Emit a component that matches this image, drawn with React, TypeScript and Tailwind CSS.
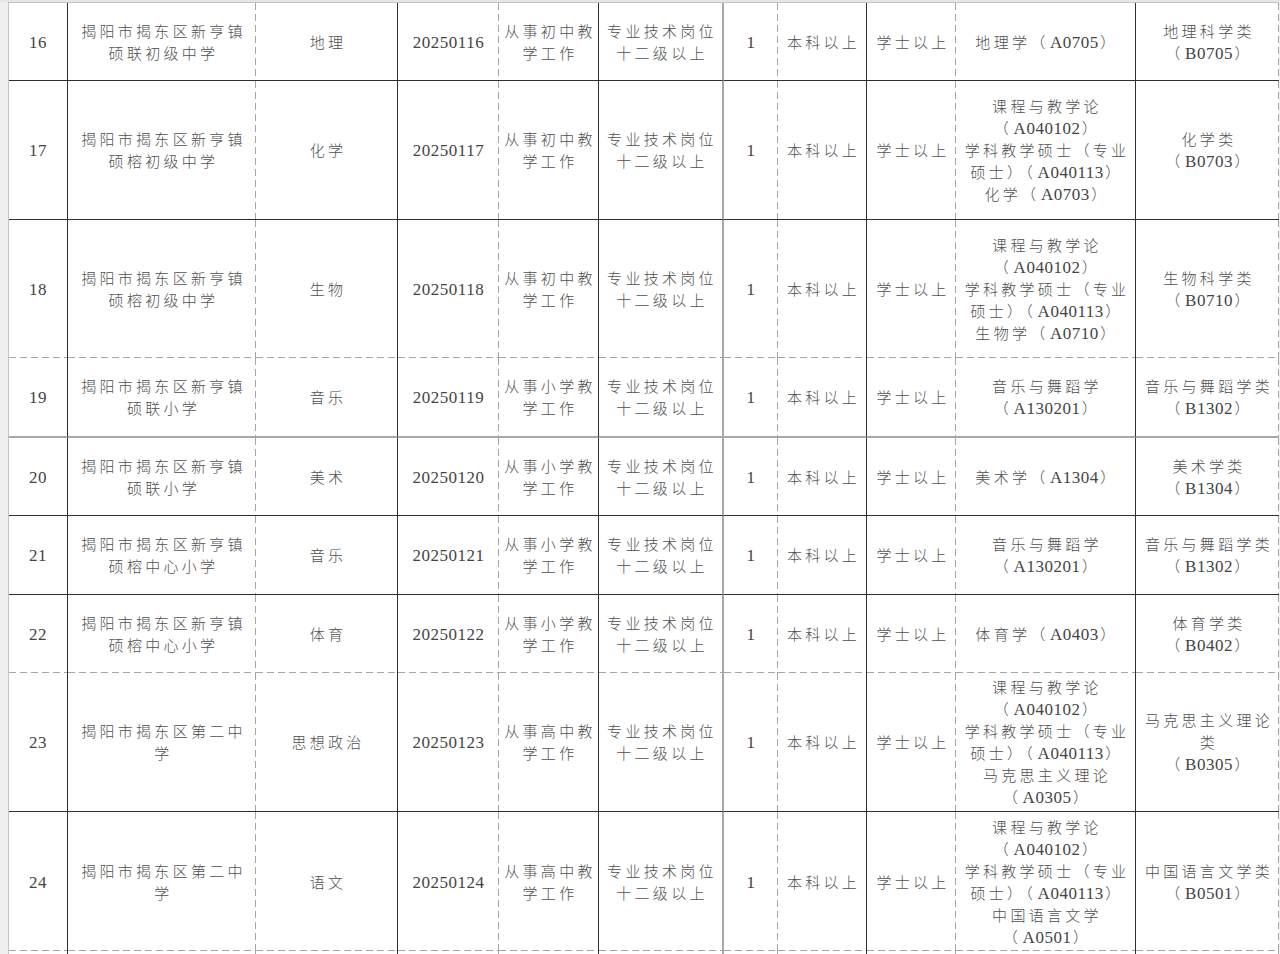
type Line = 'dark' | 'gray' | 'dash';

// 列幅（右罫線込み）と右罫線の種類
const COLS: { w: string; line: Line }[] = [
  { w: 'w-[59px]', line: 'dark' },
  { w: 'w-[188px]', line: 'dash' },
  { w: 'w-[142px]', line: 'dark' },
  { w: 'w-[101px]', line: 'dash' },
  { w: 'w-[100px]', line: 'dark' },
  { w: 'w-[125px]', line: 'gray' },
  { w: 'w-[54px]', line: 'dash' },
  { w: 'w-[89px]', line: 'dark' },
  { w: 'w-[89px]', line: 'dash' },
  { w: 'w-[180px]', line: 'dark' },
  { w: 'w-[143px]', line: 'dash' },
];

const V_SOLID: Record<string, string> = {
  dark: 'border-r border-r-[#2e2e2e]',
  gray: 'border-r-2 border-r-[#a8a8a8]',
};
const H_SOLID: Record<string, string> = {
  dark: 'border-b border-b-[#2e2e2e]',
  gray: 'border-b-2 border-b-[#a8a8a8]',
  none: '',
};
const DASH_R =
  '[background-image:repeating-linear-gradient(to_bottom,#a6a6a6_0_7px,transparent_7px_11px)] [background-size:1px_100%] [background-position:right_top] [background-repeat:no-repeat]';
const DASH_B =
  '[background-image:repeating-linear-gradient(to_right,#a6a6a6_0_7px,transparent_7px_11px)] [background-size:100%_1px] [background-position:left_bottom] [background-repeat:no-repeat]';
const DASH_RB =
  '[background-image:repeating-linear-gradient(to_bottom,#a6a6a6_0_7px,transparent_7px_11px),repeating-linear-gradient(to_right,#a6a6a6_0_7px,transparent_7px_11px)] [background-size:1px_100%,100%_1px] [background-position:right_top,left_bottom] [background-repeat:no-repeat]';

function lineClass(v: Line, h: Line | 'none'): string {
  if (v === 'dash' && h === 'dash') return DASH_RB;
  if (v === 'dash') return `${DASH_R} ${H_SOLID[h]}`;
  if (h === 'dash') return `${DASH_B} ${V_SOLID[v]}`;
  return `${V_SOLID[v]} ${H_SOLID[h]}`;
}

type Row = { h: string; b: Line; cells: string[][] };

const POST = ['专业技术岗位', '十二级以上'];
const A_MID = ['课程与教学论', '（A040102）', '学科教学硕士（专业', '硕士）（A040113）'];

const ROWS: Row[] = [
  {
    h: 'h-[78px]',
    b: 'dark',
    cells: [['16'], ['揭阳市揭东区新亨镇', '硕联初级中学'], ['地理'], ['20250116'], ['从事初中教', '学工作'], POST, ['1'], ['本科以上'], ['学士以上'], ['地理学（A0705）'], ['地理科学类', '（B0705）']],
  },
  {
    h: 'h-[139px]',
    b: 'dark',
    cells: [['17'], ['揭阳市揭东区新亨镇', '硕榕初级中学'], ['化学'], ['20250117'], ['从事初中教', '学工作'], POST, ['1'], ['本科以上'], ['学士以上'], [...A_MID, '化学（A0703）'], ['化学类', '（B0703）']],
  },
  {
    h: 'h-[138px]',
    b: 'dash',
    cells: [['18'], ['揭阳市揭东区新亨镇', '硕榕初级中学'], ['生物'], ['20250118'], ['从事初中教', '学工作'], POST, ['1'], ['本科以上'], ['学士以上'], [...A_MID, '生物学（A0710）'], ['生物科学类', '（B0710）']],
  },
  {
    h: 'h-[80px]',
    b: 'gray',
    cells: [['19'], ['揭阳市揭东区新亨镇', '硕联小学'], ['音乐'], ['20250119'], ['从事小学教', '学工作'], POST, ['1'], ['本科以上'], ['学士以上'], ['音乐与舞蹈学', '（A130201）'], ['音乐与舞蹈学类', '（B1302）']],
  },
  {
    h: 'h-[78px]',
    b: 'dark',
    cells: [['20'], ['揭阳市揭东区新亨镇', '硕联小学'], ['美术'], ['20250120'], ['从事小学教', '学工作'], POST, ['1'], ['本科以上'], ['学士以上'], ['美术学（A1304）'], ['美术学类', '（B1304）']],
  },
  {
    h: 'h-[79px]',
    b: 'dark',
    cells: [['21'], ['揭阳市揭东区新亨镇', '硕榕中心小学'], ['音乐'], ['20250121'], ['从事小学教', '学工作'], POST, ['1'], ['本科以上'], ['学士以上'], ['音乐与舞蹈学', '（A130201）'], ['音乐与舞蹈学类', '（B1302）']],
  },
  {
    h: 'h-[78px]',
    b: 'dash',
    cells: [['22'], ['揭阳市揭东区新亨镇', '硕榕中心小学'], ['体育'], ['20250122'], ['从事小学教', '学工作'], POST, ['1'], ['本科以上'], ['学士以上'], ['体育学（A0403）'], ['体育学类', '（B0402）']],
  },
  {
    h: 'h-[139px]',
    b: 'dark',
    cells: [['23'], ['揭阳市揭东区第二中', '学'], ['思想政治'], ['20250123'], ['从事高中教', '学工作'], POST, ['1'], ['本科以上'], ['学士以上'], [...A_MID, '马克思主义理论', '（A0305）'], ['马克思主义理论', '类', '（B0305）']],
  },
  {
    h: 'h-[139px]',
    b: 'dash',
    cells: [['24'], ['揭阳市揭东区第二中', '学'], ['语文'], ['20250124'], ['从事高中教', '学工作'], POST, ['1'], ['本科以上'], ['学士以上'], [...A_MID, '中国语言文学', '（A0501）'], ['中国语言文学类', '（B0501）']],
  },
];

const LATIN = /^[A-Za-z0-9]+$/;

// 英数字だけ Times 系で少し大きく、字間は控えめ
function Txt({ s }: { s: string }) {
  const parts = s.split(/([A-Za-z0-9]+)/).filter(Boolean);
  const mixed = parts.length > 1;
  return (
    <span className="whitespace-nowrap">
      {parts.map((p, i) =>
        LATIN.test(p) ? (
          <span
            key={i}
            className={`font-['Liberation_Serif',serif] font-normal text-[17px] tracking-[0.5px] text-[#444] ${mixed ? 'mx-[1.5px]' : ''}`}
          >
            {p}
          </span>
        ) : (
          <span key={i}>{p}</span>
        ),
      )}
    </span>
  );
}

export default function App() {
  return (
    <div className="w-[1280px] h-[954px] overflow-hidden bg-[#efefef] flex flex-col">
      <div className="h-[2px] shrink-0 bg-[#e6e6e6]" />
      <div className="flex flex-1 min-h-0">
        <div className="w-[8px] shrink-0 bg-[#efefef]" />
        <div className="bg-white border-l border-t border-[#c4c4c4] flex flex-col font-['Liberation_Serif','Noto_Sans_CJK_SC',serif] font-light text-[15px] leading-[22px] tracking-[3.3px] text-[#505050]">
          {[...ROWS, { h: 'h-[60px]', b: 'dash' as Line, cells: COLS.map(() => []) }].map((row, r) => (
            <div key={r} className={`flex shrink-0 ${row.h}`}>
              {row.cells.map((lines, c) => {
                const numeric = lines.length === 1 && LATIN.test(lines[0]);
                return (
                  <div
                    key={c}
                    className={`${COLS[c].w} h-full shrink-0 flex flex-col items-center justify-center text-center pt-[2px] ${numeric ? '' : 'pl-[3px]'} ${lineClass(COLS[c].line, r < ROWS.length ? row.b : 'none')}`}
                  >
                    {lines.map((l, i) => (
                      <Txt key={i} s={l} />
                    ))}
                  </div>
                );
              })}
            </div>
          ))}
        </div>
      </div>
    </div>
  );
}
